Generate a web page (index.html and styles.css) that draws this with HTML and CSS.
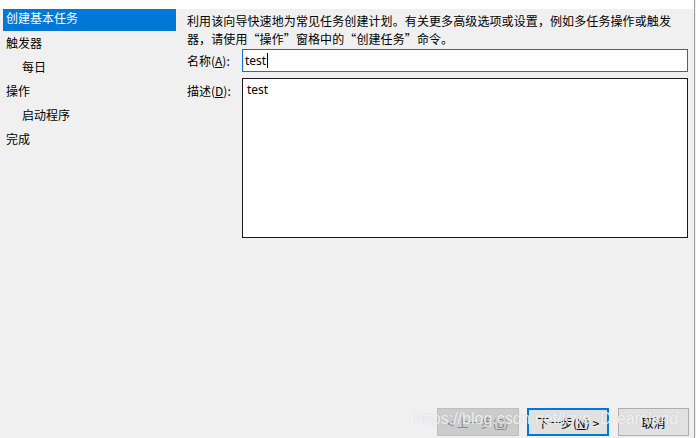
FILE: index.html
```html
<!DOCTYPE html>
<html lang="zh-CN">
<head>
<meta charset="utf-8">
<title>创建基本任务向导</title>
<link rel="stylesheet" href="styles.css">
</head>
<body>
<div class="window">
  <div class="topband"></div>
  <div class="main">
    <nav class="sidebar">
      <div class="nav-item selected">创建基本任务</div>
      <div class="nav-item">触发器</div>
      <div class="nav-item sub">每日</div>
      <div class="nav-item">操作</div>
      <div class="nav-item sub">启动程序</div>
      <div class="nav-item">完成</div>
    </nav>
    <section class="content">
      <p class="intro">利用该向导快速地为常见任务创建计划。有关更多高级选项或设置，例如多任务操作或触发器，请使用“操作”窗格中的“创建任务”命令。</p>
      <div class="field-row name-row">
        <label class="field-label">名称(<u>A</u>):</label>
        <div class="textbox">test<span class="caret"></span></div>
      </div>
      <div class="field-row desc-row">
        <label class="field-label">描述(<u>D</u>):</label>
        <div class="textarea">test</div>
      </div>
    </section>
  </div>
  <footer class="buttons">
    <div class="btn btn-disabled">&lt; 上一步(<u>B</u>)</div>
    <div class="btn btn-default">下一步(<u>N</u>) &gt;</div>
    <div class="btn btn-cancel">取消</div>
  </footer>
  <div class="watermark">https://blog.csdn.net/love_Dreamland</div>
</div>
</body>
</html>
```
FILE: styles.css
```css
html, body {
  margin: 0;
  padding: 0;
  overflow: hidden;
  background: #f0f0f0;
}

.window {
  position: relative;
  width: 695px;
  height: 438px;
  box-sizing: border-box;
  border-right: 1px solid #a0a0a0;
  display: flex;
  flex-direction: column;
  background: #f0f0f0;
  font-family: "Noto Sans CJK SC", "Noto Sans", sans-serif;
  font-size: 12px;
  color: #000;
}

.topband {
  height: 9px;
  background: #ffffff;
  flex: none;
}

.main {
  flex: 1;
  display: flex;
  min-height: 0;
}

.sidebar {
  width: 176px;
  box-sizing: border-box;
  padding-left: 3px;
  flex: none;
}

.nav-item {
  height: 24px;
  line-height: 23px;
  padding-left: 3px;
  white-space: nowrap;
}

.nav-item.selected {
  height: 22px;
  line-height: 18px;
  background: #0078d7;
  color: #ffffff;
}

.nav-item.sub {
  padding-left: 19px;
}

.content {
  flex: 1;
  padding-left: 11px;
  padding-top: 3px;
}

.intro {
  margin: 0;
  width: 486px;
  line-height: 18px;
  letter-spacing: 0.1px;
  word-break: break-all;
}

.field-row {
  display: flex;
}

.name-row {
  margin-top: 1px;
  align-items: center;
}

.desc-row {
  margin-top: 6px;
  align-items: flex-start;
}

.field-label {
  width: 55px;
  flex: none;
  line-height: 18px;
}

.desc-row .field-label {
  padding-top: 4px;
}

.textbox {
  width: 446px;
  height: 23px;
  box-sizing: border-box;
  border: 1px solid #0078d7;
  background: #ffffff;
  padding-left: 2px;
  line-height: 20px;
  font-family: "Noto Sans", sans-serif;
  display: flex;
  align-items: center;
}

.caret {
  display: inline-block;
  width: 1px;
  height: 15px;
  background: #000;
  margin-left: 1px;
}

.textarea {
  width: 446px;
  height: 160px;
  box-sizing: border-box;
  border: 1px solid #1a1a1a;
  background: #ffffff;
  padding: 2px 4px;
  line-height: 18px;
  font-family: "Noto Sans", sans-serif;
}

.buttons {
  flex: none;
  height: 30px;
  box-sizing: border-box;
  padding-bottom: 2px;
  padding-right: 5px;
  display: flex;
  justify-content: flex-end;
  align-items: flex-start;
  gap: 8px;
}

.btn {
  height: 28px;
  box-sizing: border-box;
  display: flex;
  align-items: center;
  justify-content: center;
  background: #e1e1e1;
  border: 1px solid #adadad;
  white-space: nowrap;
}

.btn-disabled {
  width: 82px;
  background: #cccccc;
  border-color: #bfbfbf;
  color: #8a8a8a;
}

.btn-default {
  width: 82px;
  border: 2px solid #0078d7;
}

.btn-cancel {
  width: 71px;
  margin-left: 1px;
}

.watermark {
  position: absolute;
  left: 414px;
  top: 410px;
  font-family: "Liberation Sans", Arial, sans-serif;
  font-size: 16px;
  line-height: 18px;
  color: rgba(255, 255, 255, 0.8);
  text-shadow: 0 0 1px rgba(120, 120, 120, 0.35);
  white-space: nowrap;
  pointer-events: none;
}
```
